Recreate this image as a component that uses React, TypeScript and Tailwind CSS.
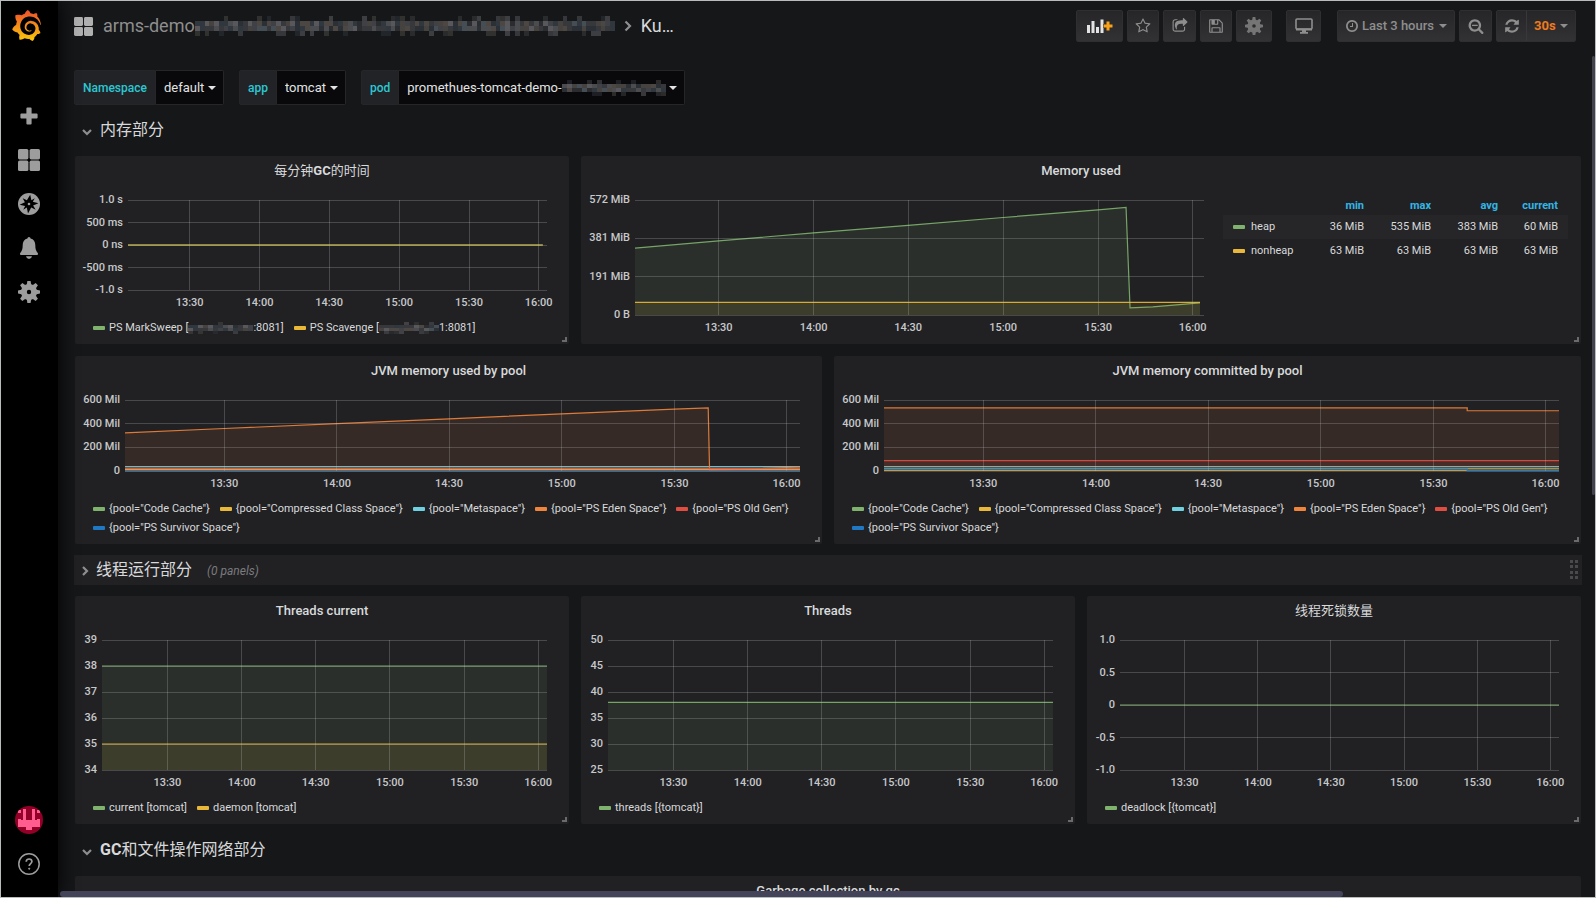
import type { ReactNode } from "react";
import { SiGrafana } from "react-icons/si";

type Series = {
  name: string;
  color: string;
  points: [number, number][];
  fill?: boolean;
};

const GREEN = "#7eb26d";
const YELLOW = "#eab839";
const CYAN = "#6ed0e0";
const ORANGE = "#ef843c";
const RED = "#e24d42";
const BLUE = "#1f78c1";

// share of the plot width at which each half hour falls
const TICKS = [
  { label: "13:30", at: 14.7 },
  { label: "14:00", at: 31.4 },
  { label: "14:30", at: 48 },
  { label: "15:00", at: 64.7 },
  { label: "15:30", at: 81.4 },
  { label: "16:00", at: 98 },
];

const flat = (v: number, end = 100): [number, number][] => [[0, v], [end, v]];

const gcTime: Series[] = [
  { name: "PS MarkSweep", color: GREEN, points: flat(0, 99) },
  { name: "PS Scavenge", color: YELLOW, points: flat(0, 99) },
];

const memoryUsed: Series[] = [
  {
    name: "heap",
    color: GREEN,
    fill: true,
    points: [[0, 333], [14.7, 369], [31.4, 408], [48, 446], [64.7, 485], [81.4, 523], [86.3, 535], [87, 36], [91, 40], [99.3, 60]],
  },
  { name: "nonheap", color: YELLOW, fill: true, points: flat(63, 99.3) },
];

const poolUsed: Series[] = [
  { name: '{pool="Code Cache"}', color: GREEN, fill: true, points: flat(20) },
  { name: '{pool="Compressed Class Space"}', color: YELLOW, fill: true, points: flat(12) },
  { name: '{pool="Metaspace"}', color: CYAN, fill: true, points: flat(37) },
  {
    name: '{pool="PS Eden Space"}',
    color: ORANGE,
    fill: true,
    points: [[0, 322], [14.7, 359], [31.4, 400], [48, 441], [64.7, 483], [81.4, 523], [86.4, 534], [86.6, 10], [91, 14], [100, 34]],
  },
  { name: '{pool="PS Old Gen"}', color: RED, fill: true, points: flat(22) },
  { name: '{pool="PS Survivor Space"}', color: BLUE, fill: true, points: flat(0) },
];

const poolCommitted: Series[] = [
  { name: '{pool="Code Cache"}', color: GREEN, fill: true, points: flat(23) },
  { name: '{pool="Compressed Class Space"}', color: YELLOW, fill: true, points: flat(5) },
  { name: '{pool="Metaspace"}', color: CYAN, fill: true, points: flat(38) },
  { name: '{pool="PS Eden Space"}', color: ORANGE, fill: true, points: [[0, 533], [86.4, 533], [86.4, 509], [100, 509]] },
  { name: '{pool="PS Old Gen"}', color: RED, fill: true, points: flat(87) },
  { name: '{pool="PS Survivor Space"}', color: BLUE, fill: true, points: [[0, 17], [86.4, 17], [86.4, 3], [100, 3]] },
];

const threadsCurrent: Series[] = [
  { name: "current [tomcat]", color: GREEN, fill: true, points: flat(38) },
  { name: "daemon [tomcat]", color: YELLOW, fill: true, points: flat(35) },
];
const threads: Series[] = [{ name: "threads [{tomcat}]", color: GREEN, fill: true, points: flat(38) }];
const deadlock: Series[] = [{ name: "deadlock [{tomcat}]", color: GREEN, points: flat(0) }];

const MOSAIC = ["#37383b", "#4b4c50", "#2b2f36", "#454240", "#58585c", "#30373e", "#4c4743", "#3f4146", "#2a2c2f", "#444e54"];

// Pixelated strip that hides a private name
function Mosaic({ cols, className, seed = 3 }: { cols: number; className: string; seed?: number }) {
  const cells: ReactNode[] = [];
  for (let x = 0; x < cols; x++) {
    for (let y = 0; y < 4; y++) {
      const n = (x * 7 + y * 13 + ((x * x + seed) % 11) * (y + 2)) % 17;
      const edge = y === 0 || y === 3;
      if (edge && n > 4) continue;
      cells.push(<rect key={`${x}-${y}`} x={x * 5} y={y * 5} width="5" height="5" fill={MOSAIC[n % 10]} fillOpacity={edge ? 0.6 : 1} />);
    }
  }
  return (
    <svg className={className} viewBox={`0 0 ${cols * 5} 20`} preserveAspectRatio="none" shapeRendering="crispEdges" aria-hidden="true">
      {cells}
    </svg>
  );
}

function Caret({ className = "" }: { className?: string }) {
  return (
    <svg className={`h-1 w-2 shrink-0 ${className}`} viewBox="0 0 8 4" fill="currentColor">
      <path d="M0 0h8L4 4z" />
    </svg>
  );
}

function Chevron({ open }: { open: boolean }) {
  return (
    <svg className={open ? "mt-1 size-2.5" : "mt-0.5 size-2.5 -rotate-90"} viewBox="0 0 10 10" fill="none" stroke="#8e8e8e" strokeWidth="2.2">
      <path d="M1 3l4 4 4-4" />
    </svg>
  );
}

function Fa({ d, className = "size-4" }: { d: string; className?: string }) {
  return (
    <svg className={className} viewBox="0 0 1792 1792" fill="currentColor">
      <path d={d} />
    </svg>
  );
}

const ICONS = {
  star: "M1201 1004l306-297-422-62-189-382-189 382-422 62 306 297-73 421 378-199 377 199zm527-357q0 22-26 48l-363 354 86 500q1 7 1 20 0 50-41 50-19 0-40-12l-449-236-449 236q-22 12-40 12-21 0-31.5-14.5t-10.5-35.5q0-6 2-20l86-500-364-354q-25-27-25-48 0-37 56-46l502-73 225-455q19-41 49-41t49 41l225 455 502 73q56 9 56 46z",
  share: "M1472 989v259q0 119-84.5 203.5t-203.5 84.5h-832q-119 0-203.5-84.5t-84.5-203.5v-832q0-119 84.5-203.5t203.5-84.5h255q13 0 22.5 9.5t9.5 22.5q0 27-26 32-77 26-133 60-10 4-16 4h-112q-66 0-113 47t-47 113v832q0 66 47 113t113 47h832q66 0 113-47t47-113v-214q0-19 18-29 28-13 54-37 16-16 35-8 21 9 21 29zm237-496l-384 384q-18 19-45 19-12 0-25-5-39-17-39-59v-192h-160q-323 0-438 131-119 137-74 473 3 23-20 34-8 2-12 2-16 0-26-13-10-14-21-31t-39.5-68.5-49.5-99.5-38.5-114-17.5-122q0-49 3.5-91t14-90 28-88 47-81.5 68.5-74 94.5-61.5 124.5-48.5 159.5-30.5 196.5-11h160v-192q0-42 39-59 13-5 25-5 26 0 45 19l384 384q19 19 19 45t-19 45z",
  save: "M512 1536h768v-384h-768v384zm896 0h128v-896q0-14-10-38.5t-20-34.5l-281-281q-10-10-34-20t-39-10v416q0 40-28 68t-68 28h-576q-40 0-68-28t-28-68v-416h-128v1280h128v-416q0-40 28-68t68-28h832q40 0 68 28t28 68v416zm-384-928v-320q0-13-9.5-22.5t-22.5-9.5h-192q-13 0-22.5 9.5t-9.5 22.5v320q0 13 9.5 22.5t22.5 9.5h192q13 0 22.5-9.5t9.5-22.5zm640 32v928q0 40-28 68t-68 28h-1344q-40 0-68-28t-28-68v-1344q0-40 28-68t68-28h928q40 0 88 20t76 48l280 280q28 28 48 76t20 88z",
  clock: "M1024 544v448q0 14-9 23t-23 9h-320q-14 0-23-9t-9-23v-64q0-14 9-23t23-9h224v-352q0-14 9-23t23-9h64q14 0 23 9t9 23zm416 352q0-148-73-273t-198-198-273-73-273 73-198 198-73 273 73 273 198 198 273 73 273-73 198-198 73-273zm224 0q0 209-103 385.5t-279.5 279.5-385.5 103-385.5-103-279.5-279.5-103-385.5 103-385.5 279.5-279.5 385.5-103 385.5 103 279.5 279.5 103 385.5z",
  zoomOut: "M1088 800v64q0 13-9.5 22.5t-22.5 9.5h-576q-13 0-22.5-9.5t-9.5-22.5v-64q0-13 9.5-22.5t22.5-9.5h576q13 0 22.5 9.5t9.5 22.5zm128 32q0-185-131.5-316.5t-316.5-131.5-316.5 131.5-131.5 316.5 131.5 316.5 316.5 131.5 316.5-131.5 131.5-316.5zm512 832q0 53-37.5 90.5t-90.5 37.5q-54 0-90-38l-343-342q-179 124-399 124-143 0-273.5-55.5t-225-150-150-225-55.5-273.5 55.5-273.5 150-225 225-150 273.5-55.5 273.5 55.5 225 150 150 225 55.5 273.5q0 220-124 399l343 343q37 37 37 90z",
  refresh: "M1639 1056q0 5-1 7-64 268-268 434.5t-478 166.5q-146 0-282.5-55t-243.5-157l-129 129q-19 19-45 19t-45-19-19-45v-448q0-26 19-45t45-19h448q26 0 45 19t19 45-19 45l-137 137q71 66 161 102t187 36q134 0 250-65t186-179q11-17 53-117 8-23 30-23h192q13 0 22.5 9.5t9.5 22.5zm25-800v448q0 26-19 45t-45 19h-448q-26 0-45-19t-19-45 19-45l138-138q-148-137-349-137-134 0-250 65t-186 179q-11 17-53 117-8 23-30 23h-199q-13 0-22.5-9.5t-9.5-22.5v-7q65-268 270-434.5t480-166.5q146 0 284 55.5t245 156.5l130-129q19-19 45-19t45 19 19 45z",
};

function Gear({ className }: { className: string }) {
  return (
    <svg className={className} viewBox="0 0 22 22" fill="currentColor">
      <path fillRule="evenodd" d="M11 3a8 8 0 1 0 0 16 8 8 0 0 0 0-16zm0 5.8a2.2 2.2 0 1 1 0 4.4 2.2 2.2 0 0 1 0-4.4z" />
      {[0, 45, 90, 135, 180, 225, 270, 315].map((a) => (
        <path key={a} d="M8.6 4.6 9.4 0h3.2l.8 4.6z" transform={`rotate(${a} 11 11)`} />
      ))}
    </svg>
  );
}

function Squares({ className }: { className: string }) {
  return (
    <svg className={className} viewBox="0 0 22 22" fill="currentColor">
      <rect width="10.4" height="10.4" rx="1.6" />
      <rect x="11.6" width="10.4" height="10.4" rx="1.6" />
      <rect y="11.6" width="10.4" height="10.4" rx="1.6" />
      <rect x="11.6" y="11.6" width="10.4" height="10.4" rx="1.6" />
    </svg>
  );
}

function SideLink({ label, children }: { label: string; children: ReactNode }) {
  return (
    <a href="#" aria-label={label} className="flex h-11 w-full items-center justify-center">
      {children}
    </a>
  );
}

function Sidebar() {
  return (
    <nav className="z-10 flex w-[57px] shrink-0 flex-col items-start bg-black text-[#9d9d9d] shadow-[0_0_20px_black]">
      <a href="#" aria-label="Home" className="mt-1.5 ml-2.5 flex h-9 items-center">
        <svg width="0" height="0" className="absolute">
          <linearGradient id="logo" x1="0" y1="0" x2="0" y2="1">
            <stop offset="0.1" stopColor="#f05a28" />
            <stop offset="1" stopColor="#fbca0a" />
          </linearGradient>
        </svg>
        <SiGrafana size={31} fill="url(#logo)" />
      </a>
      <div className="mt-[51px] flex w-14 flex-col">
        <SideLink label="Create">
          <svg className="size-[18px]" viewBox="0 0 18 18" fill="currentColor">
            <path d="M7.4 0.4h3.2q1 0 1 1v5h5q1 0 1 1v3.2q0 1-1 1h-5v5q0 1-1 1H7.400q-1 0-1-1v-5h-5q-1 0-1-1V7.400q0-1 1-1h5v-5q0-1 1-1z" />
          </svg>
        </SideLink>
        <SideLink label="Dashboards">
          <Squares className="size-[22px]" />
        </SideLink>
        <SideLink label="Explore">
          <svg className="size-[22px]" viewBox="0 0 22 22">
            <circle cx="11" cy="11" r="11" fill="currentColor" />
            <path d="M12.200 1.800l1.200 5.400 3.400-2-2 3.600 5.600 1.400-5.300 2.300 2.600 4.200-4.500-2.300L10 20.400l-1.200-5.800-3.600 2.200 1.900-3.700-5.500-1.300 5.300-2.500-2.200-4 4.200 2z" fill="#000" />
            <circle cx="11" cy="11" r="1.300" fill="currentColor" />
          </svg>
        </SideLink>
        <SideLink label="Alerting">
          <svg className="size-[22px]" viewBox="0 0 22 22" fill="currentColor">
            <path d="M11 0a1.600 1.600 0 0 1 1.600 1.500c3 .7 4.700 3.200 4.700 6.500 0 4 .7 6 2.600 8.200q.5 1.800-.9 1.800H3q-1.400 0-.9-1.800C4 14 4.700 12 4.700 8c0-3.300 1.700-5.800 4.700-6.500A1.600 1.600 0 0 1 11 0zM8 19.200h6q-.6 2.800-3 2.800t-3-2.800z" />
          </svg>
        </SideLink>
        <SideLink label="Configuration">
          <Gear className="size-[22px]" />
        </SideLink>
      </div>
      <div className="mt-auto flex w-14 flex-col pb-[11px]">
        <SideLink label="Profile">
          <svg className="size-7" viewBox="0 0 28 28">
            <clipPath id="avatar">
              <circle cx="14" cy="14" r="14" />
            </clipPath>
            <g clipPath="url(#avatar)">
              <rect width="28" height="28" fill="#930027" />
              <path d="M3 4h3v3H3zM22 4h3v3h-3zM3 13h3v1h2V3h3v11h6V3h3v11h2v-1h3v8h-8v3h-6v-3H3z" fill="#ff5d8f" />
            </g>
          </svg>
        </SideLink>
        <SideLink label="Help">
          <svg className="size-[22px]" viewBox="0 0 22 22" fill="none" stroke="currentColor">
            <circle cx="11" cy="11" r="10.200" strokeWidth="1.500" />
            <path d="M8.200 8.800c0-3.800 5.700-3.600 5.700-.2 0 2-2.700 2.200-2.700 4.400" strokeWidth="1.700" />
            <circle cx="11.200" cy="15.700" r=".6" fill="currentColor" />
          </svg>
        </SideLink>
      </div>
    </nav>
  );
}

const navButton =
  "flex h-8 items-center justify-center rounded-xs border border-[#2f2f32] bg-linear-to-b from-[#262628] to-[#323234] text-[#8e8e8e]";

function Navbar() {
  return (
    <header className="flex h-[50px] items-center pr-[19px] pl-4">
      <Squares className="size-[19px] text-[#b0b0b0]" />
      <a href="#" className="ml-2.5 flex items-center text-lg text-[#8e8e8e]">
        arms-demo
        <Mosaic cols={88} className="h-5 w-[420px]" />
      </a>
      <svg className="mx-[9px] h-3 w-2" viewBox="0 0 8 12" fill="none" stroke="#8e8e8e" strokeWidth="2.2">
        <path d="M1.500 1.500L6 6l-4.500 4.500" />
      </svg>
      <h1 className="text-lg text-[#d8d9da]">Ku…</h1>

      <div className="ml-auto flex gap-1">
        <button aria-label="Add panel" className={`${navButton} w-[47px]`}>
          <svg className="h-[18px] w-[26px]" viewBox="0 0 26 18">
            <path d="M0 8h3v8H0zM4.500 4h3v12h-3zM9 10h3v6H9zM13.500 2.500h3v13.500h-3z" fill="#e3e3e3" />
            <path d="M19.500 4.500h3v3h3v3h-3v3h-3v-3h-3v-3h3z" fill="#f9a11b" stroke="#2b2b2d" strokeWidth="1" paintOrder="stroke" />
          </svg>
        </button>
        <button aria-label="Mark as favorite" className={`${navButton} w-8`}>
          <Fa d={ICONS.star} />
        </button>
        <button aria-label="Share" className={`${navButton} w-[33px]`}>
          <Fa d={ICONS.share} />
        </button>
        <button aria-label="Save" className={`${navButton} w-8`}>
          <Fa d={ICONS.save} />
        </button>
        <button aria-label="Settings" className={`${navButton} w-9`}>
          <Gear className="size-[18px] text-[#757575]" />
        </button>
        <button aria-label="Cycle view mode" className={`${navButton} ml-2.5 w-[35px]`}>
          <svg className="h-4 w-[18px]" viewBox="0 0 18 16" fill="none" stroke="currentColor">
            <rect x="1" y="1" width="16" height="10" rx="1" strokeWidth="1.600" />
            <path d="M1 11.500h16" strokeWidth="2" />
            <path d="M7 12h4v2h2v1.800H5V14h2z" fill="currentColor" stroke="none" />
          </svg>
        </button>
        <button className={`${navButton} ml-3 w-[118px] gap-[3px] text-[13px] font-medium`}>
          <Fa d={ICONS.clock} className="size-3.5" />
          Last 3 hours
          <Caret className="ml-0.5" />
        </button>
        <button aria-label="Zoom out" className={`${navButton} w-[33px]`}>
          <Fa d={ICONS.zoomOut} />
        </button>
        <div className={`${navButton} w-20`}>
          <button aria-label="Refresh" className="flex h-full w-[30px] items-center justify-center border-r border-[#38383b]">
            <Fa d={ICONS.refresh} />
          </button>
          <label className="flex flex-1 items-center justify-center gap-1">
            <select aria-label="Refresh interval" className="appearance-none text-[13px] font-bold text-[#f07a1c]">
              <option>30s</option>
            </select>
            <Caret />
          </label>
        </div>
      </div>
    </header>
  );
}

function Variable({ name, value, hidden }: { name: string; value: string; hidden?: boolean }) {
  return (
    <div className="flex h-[35px] text-[13px]">
      <label htmlFor={`var-${name}`} className="flex items-center rounded-l-xs border border-[#262628] bg-[#222326] px-2 text-xs font-medium text-[#2bc8d4]">
        {name}
      </label>
      <div className="flex items-center rounded-r-xs border border-l-0 border-[#262628] bg-[#09090b] pt-px pr-[7px] pl-2 text-[#e3e3e3]">
        <select id={`var-${name}`} className="appearance-none">
          <option>{value}</option>
        </select>
        {hidden && <Mosaic cols={21} seed={5} className="h-4 w-[104px]" />}
        <Caret className="ml-[3px]" />
      </div>
    </div>
  );
}

type ChartProps = {
  series: Series[];
  yLabels: string[];
  min: number;
  max: number;
  gutter: string;
};

function Chart({ series, yLabels, min, max, gutter }: ChartProps) {
  const toY = (v: number) => ((max - v) / (max - min)) * 100;
  const base = toY(Math.max(min, 0));
  const rows = yLabels.map((label, i) => ({ label, at: (i / (yLabels.length - 1)) * 100 }));

  return (
    <div className="flex min-h-0 min-w-0 flex-1 pt-4 pr-[22px] pb-7 text-[11px] font-medium">
      <svg className={`h-full shrink-0 overflow-visible ${gutter}`} fill="#c7c8ca">
        <svg x="100%" overflow="visible">
          {rows.map((r) => (
            <text key={r.label} x="-5" y={`${r.at}%`} dy="3" textAnchor="end">
              {r.label}
            </text>
          ))}
        </svg>
      </svg>
      <svg className="h-full min-w-0 flex-1 overflow-visible">
        <svg width="100%" height="100%" viewBox="0 0 100 100" preserveAspectRatio="none" overflow="visible">
          {series.map((s) => {
            const line = s.points.map(([x, v]) => `${x},${toY(v)}`).join(" ");
            const last = s.points[s.points.length - 1][0];
            return (
              <g key={s.name}>
                {s.fill && <polygon points={`0,${base} ${line} ${last},${base}`} fill={s.color} fillOpacity="0.1" />}
                <polyline points={line} fill="none" stroke={s.color} strokeWidth="1.2" strokeOpacity="0.9" vectorEffect="non-scaling-stroke" />
              </g>
            );
          })}
        </svg>
        <g stroke="#c8c8c8" strokeOpacity="0.24" shapeRendering="crispEdges">
          {rows.map((r) => (
            <line key={r.label} x1="0" x2="100%" y1={`${r.at}%`} y2={`${r.at}%`} />
          ))}
          {TICKS.map((t) => (
            <line key={t.label} x1={`${t.at}%`} x2={`${t.at}%`} y1="0" y2="100%" />
          ))}
        </g>
        <svg y="100%" overflow="visible" fill="#c7c8ca">
          {TICKS.map((t) => (
            <text key={t.label} x={`${t.at}%`} y="16" textAnchor="middle">
              {t.label}
            </text>
          ))}
        </svg>
      </svg>
    </div>
  );
}

function Swatch({ color }: { color: string }) {
  return <span className="inline-block h-1 w-3 shrink-0 rounded-[1px]" style={{ backgroundColor: color }} />;
}

function Legend({ children }: { children: ReactNode }) {
  return <ul className="flex flex-wrap gap-x-2.5 pr-2 pb-[7px] pl-[18px] text-[11px] leading-[19px]">{children}</ul>;
}

function LegendItem({ color, children }: { color: string; children: ReactNode }) {
  return (
    <li className="flex items-center gap-1">
      <Swatch color={color} />
      <a href="#" className="flex items-center">
        {children}
      </a>
    </li>
  );
}

function Panel({ title, className, children }: { title: ReactNode; className: string; children?: ReactNode }) {
  return (
    <section className={`p-px ${className}`}>
      <div className="relative flex h-full flex-col rounded-xs bg-[#212124]">
        <h2 className="flex h-7 shrink-0 items-center justify-center pt-0.5 text-[13px] font-medium">{title}</h2>
        {children}
        <span className="absolute right-0.5 bottom-0.5 size-[5px] border-r-2 border-b-2 border-[#6a6a6c]" />
      </div>
    </section>
  );
}

function GraphPanel({ title, className, ...chart }: ChartProps & { title: ReactNode; className: string }) {
  return (
    <Panel title={title} className={className}>
      <Chart {...chart} />
      <Legend>
        {chart.series.map((s) => (
          <LegendItem key={s.name} color={s.color}>
            {s.name}
          </LegendItem>
        ))}
      </Legend>
    </Panel>
  );
}

function RowTitle({ children }: { children: ReactNode }) {
  return (
    <button className="col-span-6 flex h-[30px] items-center gap-2 pl-2 text-base">
      <Chevron open />
      {children}
    </button>
  );
}

const memoryStats = [
  { name: "heap", color: GREEN, values: ["36 MiB", "535 MiB", "383 MiB", "60 MiB"] },
  { name: "nonheap", color: YELLOW, values: ["63 MiB", "63 MiB", "63 MiB", "63 MiB"] },
];

function MemoryTable() {
  return (
    <div className="-ml-[3px] w-[358px] shrink-0 pt-[13px] pr-[13px] text-[11px]">
      <table className="w-full table-fixed text-right">
        <thead className="text-[#33b5e5]">
          <tr className="h-[18px]">
            <th />
            <th className="w-[67px] pr-2.5 font-bold">min</th>
            <th className="w-[67px] pr-2.5 font-bold">max</th>
            <th className="w-[67px] pr-2.5 font-bold">avg</th>
            <th className="w-[60px] pr-2.5 font-bold">current</th>
          </tr>
        </thead>
        <tbody>
          {memoryStats.map((row) => (
            <tr key={row.name} className="h-6 odd:bg-[#262629]">
              <td className="pl-2.5 text-left">
                <a href="#" className="flex items-center gap-1.5">
                  <Swatch color={row.color} />
                  {row.name}
                </a>
              </td>
              {row.values.map((v, i) => (
                <td key={i} className="pr-2.5">
                  {v}
                </td>
              ))}
            </tr>
          ))}
        </tbody>
      </table>
    </div>
  );
}

export default function App() {
  return (
    <div className="relative flex h-screen overflow-hidden border border-[#b9bcbc] bg-[#161719] font-[Roboto,'Noto_Sans_CJK_SC',sans-serif] text-[#d8d9da]">
      <Sidebar />
      <main className="min-w-0 flex-1">
        <Navbar />
        <div className="flex gap-[15px] pt-[19px] pl-4">
          <Variable name="Namespace" value="default" />
          <Variable name="app" value="tomcat" />
          <Variable name="pod" value="promethues-tomcat-demo-" hidden />
        </div>

        <div className="grid grid-cols-6 gap-2.5 pt-2.5 pr-[13px] pl-4">
          <RowTitle>内存部分</RowTitle>

          <Panel
            className="col-span-2 h-[190px]"
            title={
              <>
                <span className="font-normal">每分钟</span>
                <b>GC</b>
                <span className="font-normal">的时间</span>
              </>
            }
          >
            <Chart series={gcTime} yLabels={["1.0 s", "500 ms", "0 ns", "-500 ms", "-1.0 s"]} min={-1} max={1} gutter="w-[53px]" />
            <Legend>
              <LegendItem color={GREEN}>
                PS MarkSweep [<Mosaic cols={13} className="h-3 w-[65px]" />
                :8081]
              </LegendItem>
              <LegendItem color={YELLOW}>
                PS Scavenge [<Mosaic cols={12} seed={7} className="h-3 w-[60px]" />
                1:8081]
              </LegendItem>
            </Legend>
          </Panel>
          <Panel title="Memory used" className="col-span-4 h-[190px]">
            <div className="flex min-h-0 flex-1 pb-px">
              <Chart series={memoryUsed} yLabels={["572 MiB", "381 MiB", "191 MiB", "0 B"]} min={0} max={572} gutter="w-[54px]" />
              <MemoryTable />
            </div>
          </Panel>

          <GraphPanel
            title="JVM memory used by pool"
            className="col-span-3 h-[190px]"
            series={poolUsed}
            yLabels={["600 Mil", "400 Mil", "200 Mil", "0"]}
            min={0}
            max={600}
            gutter="w-[50px]"
          />
          <GraphPanel
            title="JVM memory committed by pool"
            className="col-span-3 h-[190px]"
            series={poolCommitted}
            yLabels={["600 Mil", "400 Mil", "200 Mil", "0"]}
            min={0}
            max={600}
            gutter="w-[50px]"
          />

          <button className="col-span-6 flex h-[30px] items-center bg-[#212124] pr-1 pl-1.5 text-base">
            <Chevron open={false} />
            <span className="ml-1.5">线程运行部分</span>
            <span className="ml-[15px] pt-0.5 text-xs text-[#7b7b7e] italic">(0 panels)</span>
            <svg className="ml-auto h-5 w-2" viewBox="0 0 8 20" fill="#4a4a4d">
              {[0, 5, 11, 16].map((y) => (
                <path key={y} d={`M0 ${y}h3v3H0zM5 ${y}h3v3H5z`} />
              ))}
            </svg>
          </button>

          <GraphPanel
            title="Threads current"
            className="col-span-2 h-[230px]"
            series={threadsCurrent}
            yLabels={["39", "38", "37", "36", "35", "34"]}
            min={34}
            max={39}
            gutter="w-[27px]"
          />
          <GraphPanel
            title="Threads"
            className="col-span-2 h-[230px]"
            series={threads}
            yLabels={["50", "45", "40", "35", "30", "25"]}
            min={25}
            max={50}
            gutter="w-[27px]"
          />
          <GraphPanel
            title={<span className="font-normal">线程死锁数量</span>}
            className="col-span-2 h-[230px]"
            series={deadlock}
            yLabels={["1.0", "0.5", "0", "-0.5", "-1.0"]}
            min={-1}
            max={1}
            gutter="w-[33px]"
          />

          <RowTitle>
            <span>
              <b>GC</b>和文件操作网络部分
            </span>
          </RowTitle>

          <Panel title="Garbage collection by gc" className="col-span-6 h-[190px]" />
        </div>
      </main>

      {/* scroll bars */}
      <div className="absolute top-[55px] right-0 h-[49%] w-[3px] rounded-full bg-[#42424c]" />
      <div className="absolute bottom-0 left-[59px] z-20 h-1.5 w-[80.5%] rounded-full bg-[#43435a]" />
    </div>
  );
}
